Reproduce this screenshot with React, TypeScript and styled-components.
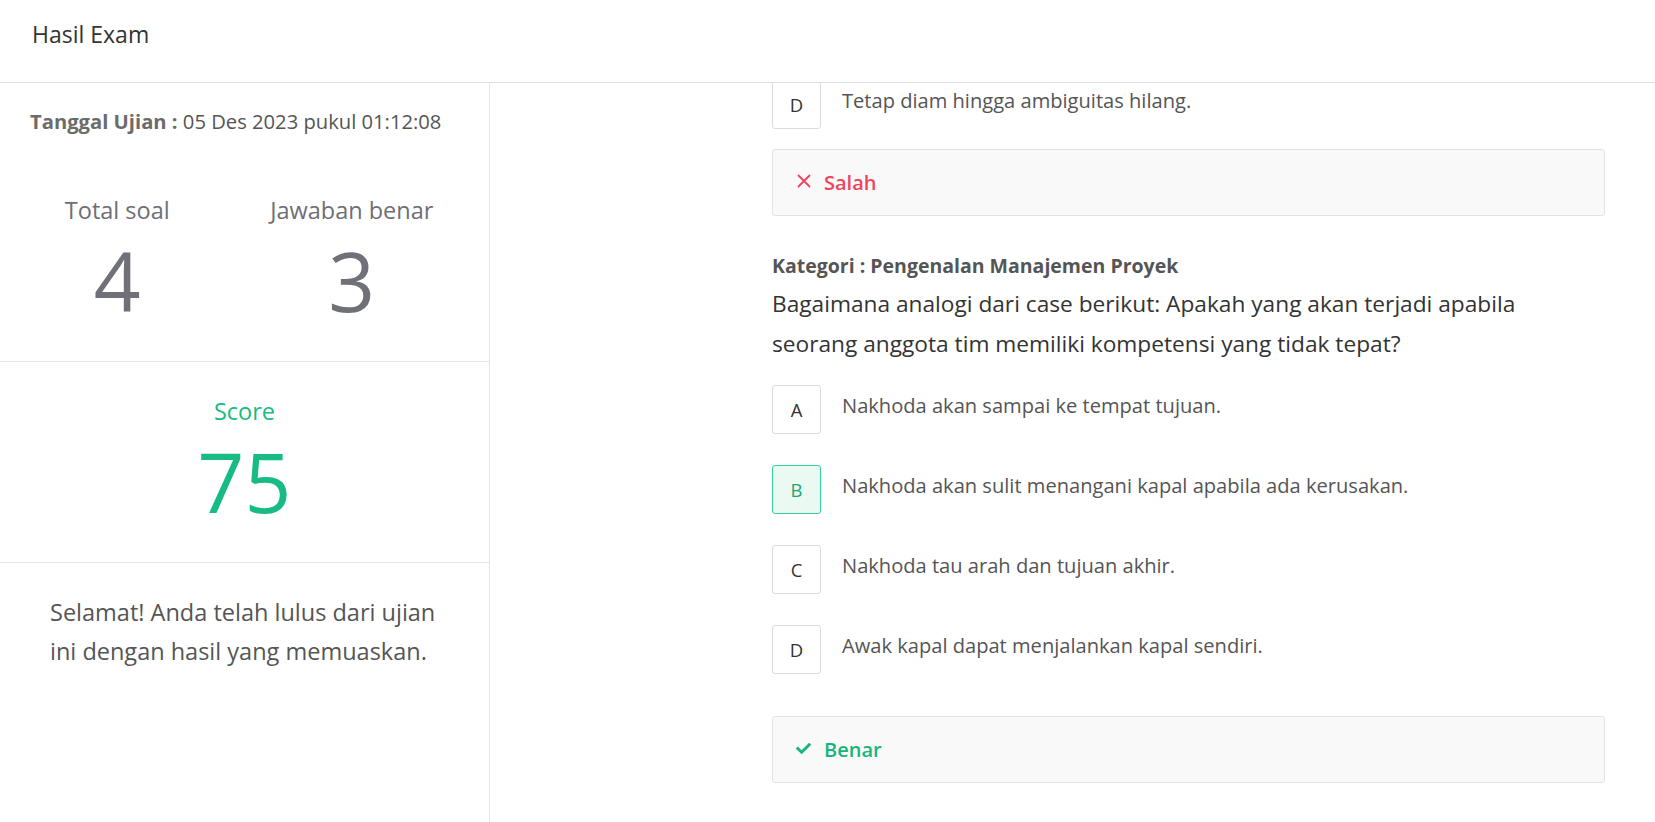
import React from "react";
import styled, { createGlobalStyle } from "styled-components";
import { FaCheck } from "react-icons/fa";

const GlobalStyle = createGlobalStyle`
  * { box-sizing: border-box; }
  html, body { margin: 0; padding: 0; background: #ffffff; }
  body {
    font-family: "Open Sans", "Noto Sans", sans-serif;
    color: #333333;
    overflow: hidden;
  }
`;

const Page = styled.div`
  display: flex;
  flex-direction: column;
  height: 100vh;
`;

const Header = styled.header`
  flex: 0 0 83px;
  height: 83px;
  padding: 19px 32px 0;
  border-bottom: 1px solid #dfdfe6;
`;

const Title = styled.h1`
  margin: 0;
  font-size: 23px;
  font-weight: 400;
  line-height: 30px;
  color: #333333;
`;

const Body = styled.div`
  flex: 1;
  display: flex;
  min-height: 0;
`;

const Sidebar = styled.aside`
  flex: 0 0 490px;
  width: 490px;
  border-right: 1px solid #e6e6e6;
  display: flex;
  flex-direction: column;
`;

const DateLine = styled.div`
  padding: 26px 30px 0;
  font-size: 20.2px;
  line-height: 24px;
  color: #555555;
  white-space: nowrap;
`;

const DateLabel = styled.span`
  font-weight: 700;
  color: #6b6b6b;
`;

const Stats = styled.div`
  display: grid;
  grid-template-columns: 1fr 1fr;
  padding: 62px 20px 40px 0;
  border-bottom: 1px solid #e6e6e6;
`;

const Stat = styled.div`
  display: flex;
  flex-direction: column;
  align-items: center;
`;

const StatLabel = styled.div<{ $green?: boolean }>`
  font-size: 23.5px;
  line-height: 30px;
  color: ${(p) => (p.$green ? "#17bb84" : "#6e6e76")};
  margin-bottom: 14px;
`;

const BigNumber = styled.div<{ $green?: boolean }>`
  font-size: 82px;
  line-height: 82px;
  font-weight: 400;
  color: ${(p) => (p.$green ? "#17bb84" : "#707078")};
`;

const ScoreBlock = styled.div`
  display: flex;
  flex-direction: column;
  align-items: center;
  padding: 34px 0 40px;
  border-bottom: 1px solid #e6e6e6;
`;

const Message = styled.p`
  margin: 0;
  padding: 30px 30px 0 50px;
  font-size: 23.5px;
  line-height: 39px;
  color: #555555;
`;

const Main = styled.main`
  flex: 1;
  overflow: hidden;
  padding: 0 50px 0 282px;
`;

const Content = styled.div`
  width: 833px;
  margin-top: -3px;
`;

const OptionRow = styled.div<{ $last?: boolean }>`
  display: flex;
  align-items: center;
  gap: 21px;
  margin-bottom: ${(p) => (p.$last ? "42px" : "31px")};
`;

const LetterBox = styled.div<{ $correct?: boolean }>`
  flex: 0 0 49px;
  width: 49px;
  height: 49px;
  display: flex;
  align-items: center;
  justify-content: center;
  border: 1px solid ${(p) => (p.$correct ? "#33d39a" : "#dcdcdc")};
  background: ${(p) => (p.$correct ? "#eafaf3" : "#ffffff")};
  color: ${(p) => (p.$correct ? "#1aa774" : "#333333")};
  border-radius: 3px;
  font-size: 18.5px;
`;

const OptionText = styled.div`
  font-size: 20.1px;
  line-height: 26px;
  color: #555555;
  margin-top: -7px;
`;

const ResultCard = styled.div<{ $ok?: boolean }>`
  display: flex;
  align-items: center;
  gap: 13px;
  height: 67px;
  padding: 0 23px;
  background: #f9f9f9;
  border: 1px solid #e2e2e2;
  border-radius: 3px;
  color: ${(p) => (p.$ok ? "#17b57d" : "#f1435c")};
  font-size: 20px;
  font-weight: 600;
`;

const IconWrap = styled.span`
  display: inline-flex;
  width: 15px;
  justify-content: center;
  margin-top: -3px;
`;

const Category = styled.div`
  margin-top: 37px;
  font-size: 19.5px;
  font-weight: 700;
  line-height: 25px;
  color: #555555;
`;

const Question = styled.div`
  margin: 6px 0 21px;
  max-width: 800px;
  font-size: 22.7px;
  line-height: 40px;
  color: #333333;
`;

const CrossIcon = () => (
  <svg width="14" height="14" viewBox="0 0 14 14" fill="none">
    <path d="M1.5 1.5L12.5 12.5M12.5 1.5L1.5 12.5" stroke="#f1435c" strokeWidth="1.8" strokeLinecap="round" />
  </svg>
);

const options = [
  { letter: "A", text: "Nakhoda akan sampai ke tempat tujuan." },
  { letter: "B", text: "Nakhoda akan sulit menangani kapal apabila ada kerusakan.", correct: true },
  { letter: "C", text: "Nakhoda tau arah dan tujuan akhir." },
  { letter: "D", text: "Awak kapal dapat menjalankan kapal sendiri." },
];

export default function App() {
  return (
    <>
      <GlobalStyle />
      <Page>
        <Header>
          <Title>Hasil Exam</Title>
        </Header>
        <Body>
          <Sidebar>
            <DateLine>
              <DateLabel>Tanggal Ujian :</DateLabel> 05 Des 2023 pukul 01:12:08
            </DateLine>
            <Stats>
              <Stat>
                <StatLabel>Total soal</StatLabel>
                <BigNumber>4</BigNumber>
              </Stat>
              <Stat>
                <StatLabel>Jawaban benar</StatLabel>
                <BigNumber>3</BigNumber>
              </Stat>
            </Stats>
            <ScoreBlock>
              <StatLabel $green>Score</StatLabel>
              <BigNumber $green>75</BigNumber>
            </ScoreBlock>
            <Message>
              Selamat! Anda telah lulus dari ujian ini dengan hasil yang memuaskan.
            </Message>
          </Sidebar>
          <Main>
            <Content>
              <OptionRow style={{ marginBottom: 20 }}>
                <LetterBox>D</LetterBox>
                <OptionText>Tetap diam hingga ambiguitas hilang.</OptionText>
              </OptionRow>
              <ResultCard>
                <IconWrap>
                  <CrossIcon />
                </IconWrap>
                Salah
              </ResultCard>
              <Category>Kategori : Pengenalan Manajemen Proyek</Category>
              <Question>
                Bagaimana analogi dari case berikut: Apakah yang akan terjadi apabila seorang anggota tim memiliki kompetensi yang tidak tepat?
              </Question>
              {options.map((o, i) => (
                <OptionRow key={o.letter} $last={i === options.length - 1}>
                  <LetterBox $correct={o.correct}>{o.letter}</LetterBox>
                  <OptionText>{o.text}</OptionText>
                </OptionRow>
              ))}
              <ResultCard $ok>
                <IconWrap>
                  <FaCheck size={15} />
                </IconWrap>
                Benar
              </ResultCard>
            </Content>
          </Main>
        </Body>
      </Page>
    </>
  );
}
